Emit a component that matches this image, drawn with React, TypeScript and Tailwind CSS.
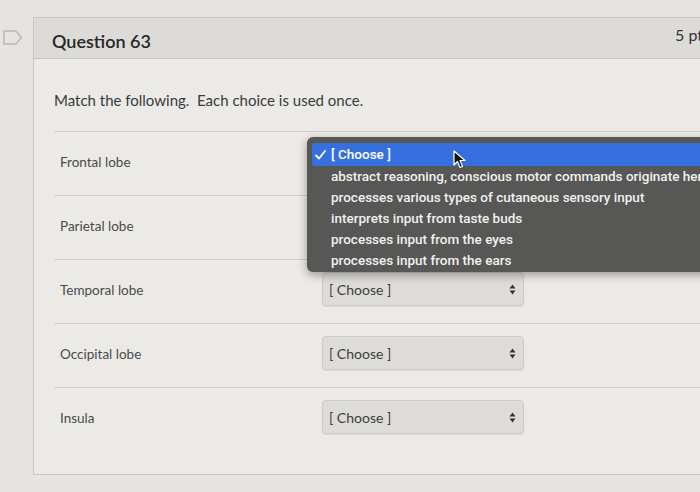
import React from "react";

const rows = ["Frontal lobe", "Parietal lobe", "Temporal lobe", "Occipital lobe", "Insula"];
const options = [
  "abstract reasoning, conscious motor commands originate here",
  "processes various types of cutaneous sensory input",
  "interprets input from taste buds",
  "processes input from the eyes",
  "processes input from the ears",
];

function Arrows() {
  return (
    <svg width="7" height="11" viewBox="0 0 7 11" className="text-[#333]">
      <path d="M3.5 0.5 L6.5 4.5 H0.5 Z" fill="currentColor" />
      <path d="M3.5 10.5 L6.5 6.5 H0.5 Z" fill="currentColor" />
    </svg>
  );
}

export default function App() {
  return (
    <div
      className="relative w-[700px] h-[492px] overflow-hidden bg-[#e5e4e0] flex"
      style={{ fontFamily: "Lato, 'Open Sans', sans-serif" }}
    >
      <div className="w-[33px] shrink-0 pt-[30px] pl-[3px]">
        <svg width="20" height="15" viewBox="0 0 20 15">
          <path d="M1 1 H13 L18.5 7.5 L13 14 H1 Z" fill="none" stroke="#b9b8b4" strokeWidth="1.5" strokeLinejoin="round" />
        </svg>
      </div>
      <div className="mt-[17px] w-[700px] shrink-0 h-[458px] border-l border-t border-b border-[#c9c8c4] bg-[#ebeae6] flex flex-col">
        <div className="h-[41px] bg-[#dcdbd7] border-b border-[#c4c3bf] flex justify-between">
          <div className="pl-[18px] pt-[10px] text-[18px] font-semibold text-[#262626]">Question 63</div>
          <div className="pt-[5px] pr-[30px] text-[16px] text-[#333]">5 pt</div>
        </div>
        <div className="pl-[20px] flex flex-col">
          <div className="pt-[30px] h-[72px] text-[15px] text-[#3a3a3a]">Match the following.&nbsp; Each choice is used once.</div>
          {rows.map((r, i) => (
            <div key={r} className="h-[64px] border-t border-[#cfceca] flex">
              <div className="w-[268px] pl-[6px] pt-[20px] text-[13.5px] text-[#4a4a4a]">{r}</div>
              <div className="mt-[12px] w-[202px] h-[34px] rounded-[4px] bg-[#dedcd8] border border-[#cdccc8] shadow-[0_1px_1px_rgba(0,0,0,0.08)] flex items-center justify-between pl-[6px] pr-[7px]">
                {i < 2 ? null : (
                  <>
                    <span className="text-[14px] text-[#3c3c3c]">[ Choose ]</span>
                    <Arrows />
                  </>
                )}
              </div>
            </div>
          ))}
        </div>
      </div>

      <div
        className="absolute left-[307px] top-[137px] w-[420px] h-[135px] rounded-[6px] bg-[#575756] shadow-[0_3px_10px_rgba(0,0,0,0.35)] pt-[6px] pl-[5px]"
        style={{ fontFamily: "Roboto, 'Open Sans', sans-serif" }}
      >
        <div className="h-[23px] bg-[#3570de] rounded-l-[3px] flex items-center text-[13.5px] font-medium text-white">
          <span className="w-[19px] pl-[3px]">
            <svg width="11" height="10" viewBox="0 0 11 10">
              <path d="M1 5.5 L4 8.5 L10 1" fill="none" stroke="white" strokeWidth="1.8" strokeLinecap="round" strokeLinejoin="round" />
            </svg>
          </span>
          <span>[ Choose ]</span>
        </div>
        {options.map((o) => (
          <div key={o} className="h-[21px] pl-[19px] flex items-center text-[13.5px] font-medium text-[#f0f0f0] whitespace-nowrap">
            {o}
          </div>
        ))}
      </div>

      <svg className="absolute left-[453px] top-[150px]" width="14" height="20" viewBox="0 0 14 20">
        <path d="M1 1 L1 15 L4.5 11.5 L7 17.5 L9.5 16.5 L7 10.5 L12 10.5 Z" fill="#111" stroke="white" strokeWidth="1.2" strokeLinejoin="round" />
      </svg>
    </div>
  );
}
